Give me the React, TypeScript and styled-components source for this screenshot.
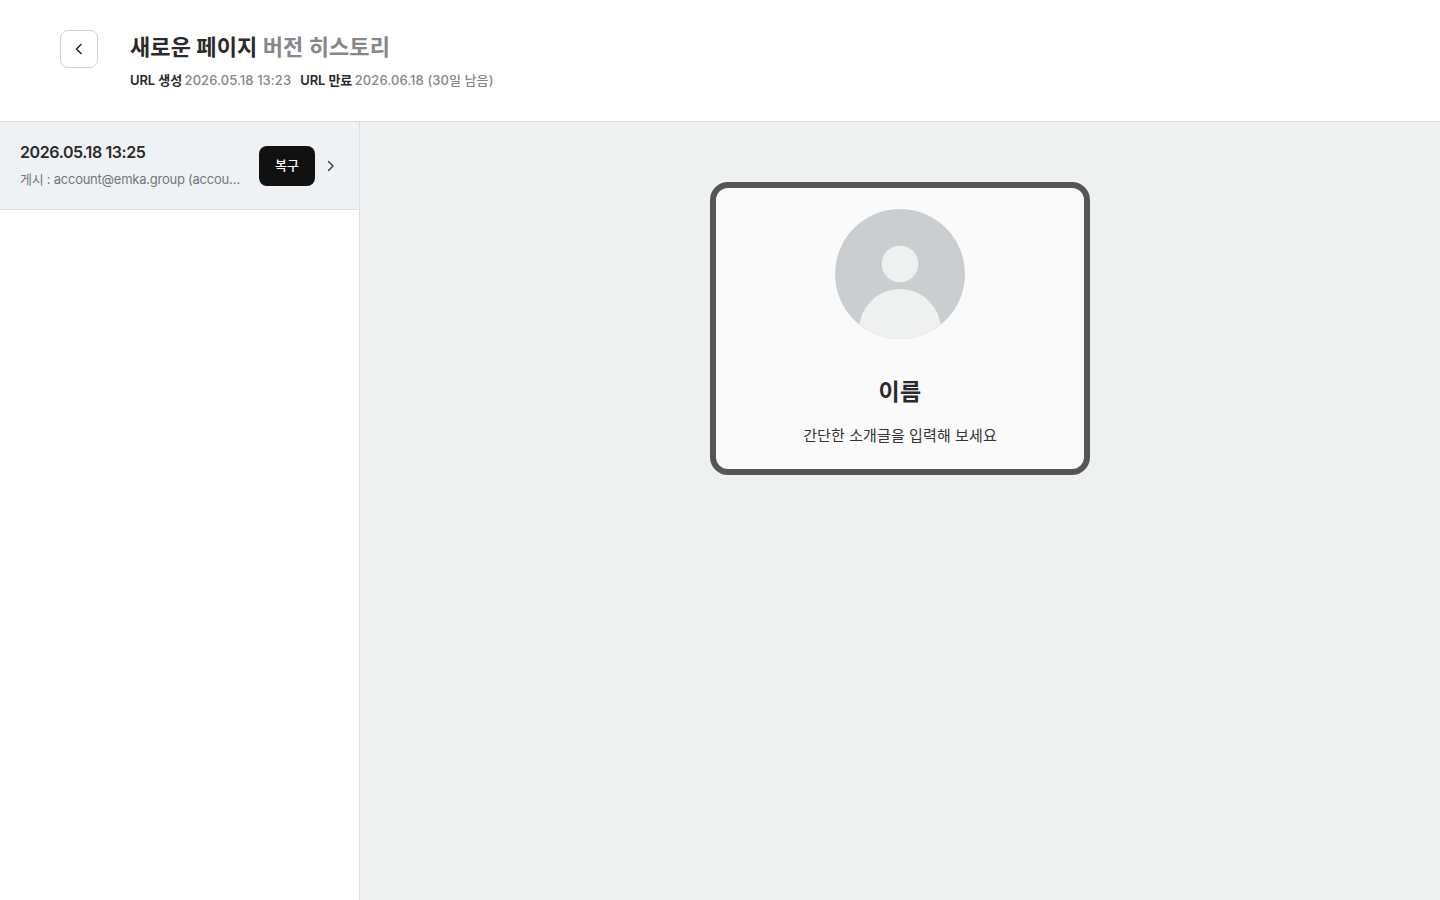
import React from "react";
import styled, { createGlobalStyle } from "styled-components";

const Global = createGlobalStyle`
  html, body { margin: 0; padding: 0; height: 100%; background: #fff; }
  body { font-family: Inter, "Noto Sans CJK KR", sans-serif; color: #222; overflow: hidden; }
  * { box-sizing: border-box; }
`;

const Page = styled.div`
  width: 100%;
  height: 100vh;
  display: flex;
  flex-direction: column;
`;

const Header = styled.header`
  height: 122px;
  flex: none;
  display: flex;
  align-items: flex-start;
  gap: 32px;
  padding: 30px 60px 0;
  border-bottom: 1px solid #dcdee0;
  background: #fff;
`;

const BackButton = styled.button`
  width: 38px;
  height: 38px;
  padding: 0;
  display: flex;
  align-items: center;
  justify-content: center;
  background: #fff;
  border: 1px solid #cfd1d4;
  border-radius: 8px;
  color: #222;
`;

const TitleBlock = styled.div`
  display: flex;
  flex-direction: column;
  gap: 7px;
`;

const Title = styled.h1`
  margin: 0;
  font-size: 22px;
  line-height: 34px;
  font-weight: 700;
  letter-spacing: 0.1px;
  color: #2a2a2a;
`;

const TitleMuted = styled.span`
  color: #85878a;
`;

const Meta = styled.div`
  display: flex;
  gap: 9px;
  font-size: 13px;
  line-height: 18px;
  font-weight: 500;
`;

const MetaItem = styled.span`
  color: #85878a;
  letter-spacing: 0.08px;
`;

const MetaLabel = styled.b`
  font-weight: 600;
  letter-spacing: -0.1px;
  margin-right: -1px;
  color: #2a2a2a;
`;

const Body = styled.div`
  flex: 1;
  display: flex;
  min-height: 0;
`;

const Sidebar = styled.aside`
  width: 360px;
  flex: none;
  background: #fff;
  border-right: 1px solid #dcdee0;
`;

const Row = styled.div`
  height: 88px;
  display: flex;
  align-items: center;
  padding: 0 20px;
  background: #eff2f5;
  border-bottom: 1px solid #dcdee0;
`;

const RowText = styled.div`
  width: 221px;
  flex: none;
  display: flex;
  flex-direction: column;
  gap: 7px;
  padding-bottom: 3px;
`;

const RowDate = styled.div`
  font-size: 16px;
  line-height: 22px;
  font-weight: 600;
  letter-spacing: -0.4px;
  color: #2a2a2a;
`;

const RowSub = styled.div`
  font-size: 13px;
  line-height: 18px;
  letter-spacing: -0.25px;
  color: #74767a;
  white-space: nowrap;
  overflow: hidden;
  text-overflow: ellipsis;
`;

const RestoreButton = styled.button`
  width: 56px;
  height: 40px;
  margin-left: 18px;
  padding: 0 0 2px;
  flex: none;
  border: 0;
  border-radius: 8px;
  background: #111;
  color: #fff;
  font-family: inherit;
  font-size: 13px;
  font-weight: 500;
`;

const Chevron = styled.span`
  display: flex;
  margin-left: 8px;
  color: #444;
`;

const Canvas = styled.main`
  flex: 1;
  display: flex;
  justify-content: center;
  align-items: flex-start;
  padding-top: 60px;
  background: #eff0f0;
`;

const Card = styled.section`
  width: 380px;
  height: 293px;
  display: flex;
  flex-direction: column;
  align-items: center;
  padding-top: 21px;
  border: 6px solid #545558;
  border-radius: 18px;
  background: #fafafa;
`;

const Avatar = styled.svg`
  display: block;
  width: 130px;
  height: 130px;
`;

const Name = styled.h2`
  margin: 37px 0 0;
  font-size: 23px;
  line-height: 32px;
  font-weight: 700;
  letter-spacing: 0.3px;
  color: #2a2a2a;
`;

const Intro = styled.p`
  margin: 16px 0 0;
  font-size: 15px;
  line-height: 24px;
  font-weight: 400;
  letter-spacing: 0.1px;
  color: #333;
`;

export default function App() {
  return (
    <Page>
      <Global />
      <Header>
        <BackButton aria-label="뒤로">
          <svg width="16" height="16" viewBox="0 0 16 16" fill="none">
            <path d="M10 3.5 5.5 8l4.5 4.5" stroke="currentColor" strokeWidth="1.5" strokeLinecap="round" strokeLinejoin="round" />
          </svg>
        </BackButton>
        <TitleBlock>
          <Title>
            새로운 페이지 <TitleMuted>버전 히스토리</TitleMuted>
          </Title>
          <Meta>
            <MetaItem><MetaLabel>URL 생성</MetaLabel> 2026.05.18 13:23</MetaItem>
            <MetaItem><MetaLabel>URL 만료</MetaLabel> 2026.06.18 (30일 남음)</MetaItem>
          </Meta>
        </TitleBlock>
      </Header>
      <Body>
        <Sidebar>
          <Row>
            <RowText>
              <RowDate>2026.05.18 13:25</RowDate>
              <RowSub>게시 : account@emka.group (account@emka.group)</RowSub>
            </RowText>
            <RestoreButton>복구</RestoreButton>
            <Chevron>
              <svg width="16" height="16" viewBox="0 0 16 16" fill="none">
                <path d="M5.5 3.5 10 8l-4.5 4.5" stroke="currentColor" strokeWidth="1.5" strokeLinecap="round" strokeLinejoin="round" />
              </svg>
            </Chevron>
          </Row>
        </Sidebar>
        <Canvas>
          <Card>
            <Avatar viewBox="0 0 130 130">
              <defs>
                <clipPath id="avatar-clip"><circle cx="65" cy="65" r="65" /></clipPath>
              </defs>
              <circle cx="65" cy="65" r="65" fill="#cbced1" />
              <g clipPath="url(#avatar-clip)">
                <circle cx="65" cy="55" r="18.3" fill="#eff0f0" />
                <circle cx="65" cy="121" r="41" fill="#eff0f0" />
              </g>
            </Avatar>
            <Name>이름</Name>
            <Intro>간단한 소개글을 입력해 보세요</Intro>
          </Card>
        </Canvas>
      </Body>
    </Page>
  );
}
